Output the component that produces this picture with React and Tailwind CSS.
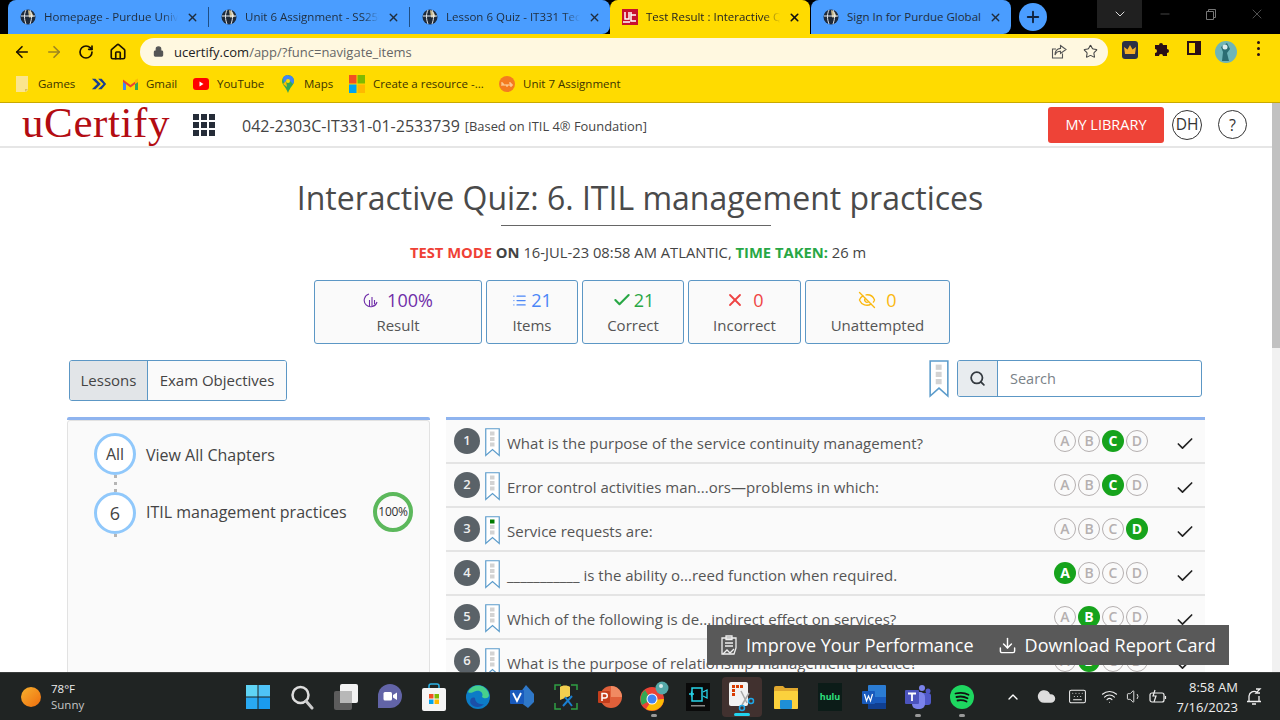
import {
  ArrowLeft, ArrowRight, RotateCw, Home, Lock, Star, X, Plus, ChevronDown, ChevronUp, Minus, Check,
  List, Search, Download, Keyboard, Wifi, Volume1, Cloud, EyeOff,
} from 'lucide-react';

const tabs = [
  { title: 'Homepage - Purdue University', w: 'w-[201px]' },
  { title: 'Unit 6 Assignment - SS250', w: 'w-[201px]' },
  { title: 'Lesson 6 Quiz - IT331 Tech', w: 'w-[200px]' },
];

const rows = [
  { text: 'What is the purpose of the service continuity management?', ans: 'C' },
  { text: 'Error control activities man...ors—problems in which:', ans: 'C' },
  { text: 'Service requests are:', ans: 'D', flagged: true },
  { text: '___________ is the ability o...reed function when required.', ans: 'A' },
  { text: 'Which of the following is de...indirect effect on services?', ans: 'B' },
  { text: 'What is the purpose of relationship management practice?', ans: 'B' },
];

const bookmarks = [
  { label: 'Games', icon: <FolderIcon />, cls: 'ml-[14px] w-[77px]' },
  { label: '', icon: <ChevronsIcon />, cls: 'w-[31px]' },
  { label: 'Gmail', icon: <GmailIcon />, cls: 'w-[71px]' },
  { label: 'YouTube', icon: <YoutubeIcon />, cls: 'w-[87px]' },
  { label: 'Maps', icon: <MapsIcon />, cls: 'w-[69px]' },
  { label: 'Create a resource -...', icon: <MsIcon />, cls: 'w-[150px]' },
  { label: 'Unit 7 Assignment', icon: <HubIcon />, cls: '' },
];

function Globe() {
  return (
    <svg width="16" height="16" viewBox="0 0 16 16" className="shrink-0">
      <circle cx="8" cy="8" r="7.5" fill="#1e2a3a" />
      <path d="M8 1c3 1 5 3.500 5.500 7L9 8.500 8 1z" fill="#c9b98a" />
      <path d="M1 7h14M6 1c-2 4-2 9 0 14M10 1c2 4 2 9 0 14" stroke="#e8edf2" strokeWidth="1" fill="none" />
    </svg>
  );
}

function FolderIcon() {
  return (
    <svg width="16" height="18" viewBox="0 0 16 18">
      <path d="M2 1h9l3 0v14l-2 2H2z" fill="#fbe58d" />
      <path d="M11 17v-3h3z" fill="#dcc25a" />
    </svg>
  );
}

function ChevronsIcon() {
  return (
    <svg width="18" height="14" viewBox="0 0 18 14">
      <path d="M1 1l6 6-6 6h4l6-6-6-6z" fill="#1d3f8f" />
      <path d="M8 1l6 6-6 6h4l5-6-5-6z" fill="#1d3f8f" />
    </svg>
  );
}

function GmailIcon() {
  return (
    <svg width="15" height="12" viewBox="0 0 15 12">
      <path d="M0 2v10h3V5z" fill="#4285f4" />
      <path d="M15 2v10h-3V5z" fill="#34a853" />
      <path d="M0 1.500 7.500 7 15 1.500V4L7.500 9.500 0 4z" fill="#ea4335" />
      <path d="M12 2l3-1.500V4l-3 2z" fill="#fbbc04" />
    </svg>
  );
}

function YoutubeIcon() {
  return (
    <svg width="16" height="12" viewBox="0 0 16 12">
      <rect width="16" height="12" rx="3" fill="#ff0000" />
      <path d="M6.500 3.500v5l4-2.500z" fill="#fff" />
    </svg>
  );
}

function MapsIcon() {
  return (
    <svg width="12" height="18" viewBox="0 0 12 18">
      <path d="M6 0a6 6 0 0 1 6 6c0 4-4 6-6 12-2-6-6-8-6-12a6 6 0 0 1 6-6z" fill="#34a853" />
      <path d="M1 2.500A6 6 0 0 1 6 0l2 2-6 6z" fill="#4285f4" />
      <path d="M8 .5a6 6 0 0 1 4 5.500c0 1-.3 2-1 3L6 4z" fill="#4285f4" />
      <path d="M1 9 4 6l1 6z" fill="#fbbc04" />
      <circle cx="6" cy="6" r="2" fill="#ffdb00" />
    </svg>
  );
}

function MsIcon() {
  return (
    <svg width="16" height="18" viewBox="0 0 16 18">
      <rect width="7.500" height="8.500" fill="#f25022" />
      <rect x="8.500" width="7.500" height="8.500" fill="#7fba00" />
      <rect y="9.500" width="7.500" height="8.500" fill="#00a4ef" />
      <rect x="8.500" y="9.500" width="7.500" height="8.500" fill="#ffb900" />
    </svg>
  );
}

function HubIcon() {
  return (
    <svg width="16" height="16" viewBox="0 0 16 16">
      <circle cx="8" cy="8" r="8" fill="#f47b20" />
      <path d="M3 10V6M3 8h2v2M7 8v2h2V8M11 6v4h2V8h-2" stroke="#ffe0b0" strokeWidth="1" fill="none" />
    </svg>
  );
}

function ActiveFavicon() {
  return (
    <svg width="16" height="16" viewBox="0 0 16 16" className="shrink-0">
      <rect width="16" height="16" fill="#c8102e" />
      <path d="M3 3v7h4V3M9 3v9h5M9 6h5M1 13h7" stroke="#fff" strokeWidth="1.500" fill="none" />
    </svg>
  );
}

function ShareIcon() {
  return (
    <svg width="16" height="16" viewBox="0 0 16 16" fill="none" stroke="#555" strokeWidth="1.100" className="ml-auto">
      <path d="M11.500 9.500v4.500h-10V5H5" />
      <path d="M9.500 1.500L15 5.500l-5.500 4V7.300C7 7.300 5 8.500 4 11c0-3.500 2-6.200 5.500-6.600z" />
    </svg>
  );
}

function Ribbon({ flagged, large }) {
  return (
    <svg width={large ? 22 : 15} height={large ? 38 : 29} viewBox="0 0 15 29" className="shrink-0">
      <path d="M.75.75h13.500V27.500L7.500 21.500.75 27.500z" fill="#fff" stroke="#5c9ccb" strokeWidth="1.200" />
      <rect x="5" y="3.500" width="4.500" height="4" fill={flagged ? '#007a00' : '#d3d3d3'} />
      <rect x="5" y="9" width="4.500" height="4" fill="#d3d3d3" />
      <rect x="5" y="14.500" width="4.500" height="4" fill="#d3d3d3" />
    </svg>
  );
}

function ResultIcon() {
  return (
    <svg width="16" height="16" viewBox="0 0 16 16" fill="none" stroke="#6f2da8" strokeWidth="1.100">
      <path d="M6 2a6.500 6.500 0 1 0 8 8" />
      <path d="M6.500 14V8M9 14V5M11.500 12V8" />
    </svg>
  );
}

function StatBox({ cls, color, icon, value, label, gap = 'gap-2' }) {
  return (
    <div className={`${cls} h-[64px] border border-[#5c97c5] rounded-[3px] bg-[#fafafa] flex flex-col items-center pt-[6px]`}>
      <div className={`flex items-center ${gap} text-[18px] leading-[26px] ${color}`}>
        {icon}
        <span>{value}</span>
      </div>
      <div className="text-[15px] leading-[22px] mt-[1px] text-[#555]">{label}</div>
    </div>
  );
}

function OptionDot({ letter, active }) {
  return (
    <span
      className={`w-[22px] h-[22px] rounded-full flex items-center justify-center text-[14px] leading-none ${
        active ? 'bg-[#16a31c] text-white font-bold' : 'border border-[#b5b0b0] text-[#b5b0b0] font-semibold'
      }`}
    >
      {letter}
    </span>
  );
}

function QuestionRow({ index, row }) {
  return (
    <div className="h-[44px] shrink-0 bg-[#fafafa] border-b-2 border-[#e4e4e4] flex items-start pl-[8px]">
      <span className="w-[26px] h-[26px] mt-[8px] rounded-full bg-[#5a6268] text-[#eee] text-[13px] font-semibold flex items-center justify-center shrink-0">
        {index + 1}
      </span>
      <span className="ml-[5px] mt-[8px]">
        <Ribbon flagged={row.flagged} />
      </span>
      <span className="ml-[7px] mt-[12px] w-[541px] text-[15px] tracking-[0.02px] leading-[22px] text-[#555] whitespace-nowrap">{row.text}</span>
      <span className="mt-[10px] ml-[6px] flex gap-[2px]">
        {['A', 'B', 'C', 'D'].map((l) => (
          <OptionDot key={l} letter={l} active={l === row.ans} />
        ))}
      </span>
      <Check className="ml-[27px] mt-[14px] text-[#222]" size={20} strokeWidth={2} />
    </div>
  );
}

function TaskIcon({ children }) {
  return <div className="w-[44px] h-[48px] flex items-center justify-center shrink-0 relative">{children}</div>;
}

function TaskbarIcons() {
  return (
    <div className="flex">
      <TaskIcon>
        <svg width="24" height="24" viewBox="0 0 24 24">
          <rect width="11.500" height="11.500" fill="#5fd4f5" />
          <rect x="12.500" width="11.500" height="11.500" fill="#4fc3f7" />
          <rect y="12.500" width="11.500" height="11.500" fill="#29a9f2" />
          <rect x="12.500" y="12.500" width="11.500" height="11.500" fill="#1a9bf0" />
        </svg>
      </TaskIcon>
      <TaskIcon>
        <svg width="24" height="26" viewBox="0 0 24 26" fill="none">
          <circle cx="10.500" cy="11" r="8" stroke="#ddd" strokeWidth="2.500" />
          <path d="M16 17l6 7" stroke="#ccc" strokeWidth="3" strokeLinecap="round" />
        </svg>
      </TaskIcon>
      <TaskIcon>
        <svg width="24" height="26" viewBox="0 0 24 26">
          <rect y="7" width="18" height="19" rx="2" fill="#5c5c5c" />
          <rect x="6" width="18" height="19" rx="2" fill="#f2f2f2" />
          <rect x="6" y="7" width="12" height="12" fill="#b8b8b8" />
        </svg>
      </TaskIcon>
      <TaskIcon>
        <svg width="24" height="26" viewBox="0 0 24 26">
          <path d="M12 0a12 12 0 0 1 0 24H0v-12A12 12 0 0 1 12 0z" fill="#6264a7" />
          <rect x="5.500" y="8" width="8.500" height="8.500" rx="1.500" fill="#fff" />
          <path d="M15 11l4-2.500v7.500L15 13.500z" fill="#fff" />
        </svg>
      </TaskIcon>
      <TaskIcon>
        <svg width="24" height="28" viewBox="0 0 24 28">
          <path d="M7 6V3a2 2 0 0 1 2-2h6a2 2 0 0 1 2 2v3" fill="none" stroke="#2bb3e8" strokeWidth="1.500" />
          <rect y="5" width="24" height="23" rx="2" fill="#f5f5f5" />
          <rect x="7" y="11" width="4.500" height="4.500" fill="#f25022" />
          <rect x="12.500" y="11" width="4.500" height="4.500" fill="#7fba00" />
          <rect x="7" y="16.500" width="4.500" height="4.500" fill="#00a4ef" />
          <rect x="12.500" y="16.500" width="4.500" height="4.500" fill="#ffb900" />
        </svg>
      </TaskIcon>
      <TaskIcon>
        <svg width="24" height="26" viewBox="0 0 24 26">
          <circle cx="12" cy="13" r="12" fill="#0c7cc6" />
          <path d="M2 8a11 11 0 0 1 21 3c0 4-5 4-7 2 2-4-2-7-6-6-3 1-6 3-8 1z" fill="#47d08c" />
          <path d="M9 14c0 4 4 7 9 6-3 4-10 4-13 0-2-3 0-8 4-6z" fill="#1b4fa8" />
        </svg>
      </TaskIcon>
      <TaskIcon>
        <svg width="24" height="26" viewBox="0 0 24 26">
          <path d="M10 9l6-8 8 9v8l-6 6-8-6z" fill="#2f78c8" />
          <rect y="6" width="14" height="14" rx="1" fill="#185abd" />
          <path d="M3 9l4 8 4-8" stroke="#fff" strokeWidth="1.800" fill="none" />
        </svg>
      </TaskIcon>
      <TaskIcon>
        <svg width="24" height="26" viewBox="0 0 24 26">
          <path d="M6 3c2-2 8-2 10 0v9l-10 4z" fill="#f3cf4f" />
          <path d="M1 6V1h6M17 1h6v5M1 19v6h6M23 19v6h-6" stroke="#2f9e44" strokeWidth="1.500" fill="none" />
          <path d="M9 22l9-10M11 13l7 9" stroke="#1a7fd0" strokeWidth="2" />
        </svg>
      </TaskIcon>
      <TaskIcon>
        <svg width="24" height="26" viewBox="0 0 24 26">
          <circle cx="13" cy="13" r="11" fill="#e0603a" />
          <path d="M13 2a11 11 0 0 1 11 11H13z" fill="#f08a62" />
          <rect y="7" width="12" height="12" rx="1" fill="#c43e1c" />
          <path d="M4 17V9.500h3a2 2 0 0 1 0 4.500H4" stroke="#fff" strokeWidth="1.500" fill="none" />
        </svg>
      </TaskIcon>
      <TaskIcon>
        <svg width="30" height="32" viewBox="0 0 30 32">
          <circle cx="13" cy="18" r="12" fill="#ea4335" />
          <path d="M3 24A12 12 0 0 1 6 9l6 10z" fill="#34a853" />
          <path d="M25 18a12 12 0 0 1-18 10l6-9z" fill="#fbbc04" />
          <circle cx="13" cy="18" r="5.500" fill="#fff" />
          <circle cx="13" cy="18" r="4.500" fill="#4285f4" />
          <circle cx="23" cy="7" r="6.500" fill="#54a8a8" />
          <circle cx="22" cy="5" r="2" fill="#d8eaea" />
        </svg>
        <span className="absolute bottom-[4px] w-[6px] h-[3px] rounded-full bg-[#999]" />
      </TaskIcon>
      <TaskIcon>
        <svg width="24" height="28" viewBox="0 0 24 28">
          <rect width="24" height="28" fill="#0a0a0a" />
          <path d="M6 5h10v13H6z" fill="none" stroke="#27d3e8" strokeWidth="1.500" />
          <path d="M17 9l4-2v8l-4-2M3 11h5M5.500 8.500v5" fill="none" stroke="#27d3e8" strokeWidth="1.300" />
          <rect x="5" y="22" width="14" height="1.500" fill="#888" />
        </svg>
      </TaskIcon>
      <TaskIcon>
        <div className="absolute left-[2px] top-[4px] w-[40px] h-[40px] rounded bg-[#41312f]" />
        <svg width="26" height="30" viewBox="0 0 26 30" className="relative">
          <rect width="19" height="24" rx="2" fill="#f2f2f2" />
          <path d="M3 3h3v3H3zM7 3h3v3H7zM11 3h3v3h-3zM3 7h3v3H3zM3 11h3v3H3z" fill="#d83b01" />
          <path d="M12 9l6 12M20 11l-7 12" stroke="#a9a9a9" strokeWidth="1.500" />
          <circle cx="22" cy="19" r="2.500" fill="none" stroke="#1ea7e8" strokeWidth="1.500" />
          <circle cx="13" cy="26" r="2.500" fill="none" stroke="#1ea7e8" strokeWidth="1.500" />
        </svg>
        <span className="absolute bottom-[5px] left-[14px] w-[16px] h-[3px] rounded-full bg-[#22d3ee]" />
      </TaskIcon>
      <TaskIcon>
        <svg width="24" height="24" viewBox="0 0 24 24">
          <path d="M0 3a2 2 0 0 1 2-2h7l2 2h13v19a2 2 0 0 1-2 2H2a2 2 0 0 1-2-2z" fill="#e0a82e" />
          <rect y="6" width="24" height="18" rx="1" fill="#fbd13d" />
          <rect x="6" y="15" width="12" height="9" rx="1" fill="#1f8fd6" />
        </svg>
      </TaskIcon>
      <TaskIcon>
        <div className="w-[24px] h-[28px] bg-[#0c1c18] flex items-center justify-center text-[#2ee27f] text-[9px] font-bold">hulu</div>
      </TaskIcon>
      <TaskIcon>
        <svg width="24" height="24" viewBox="0 0 24 24">
          <rect x="6" width="18" height="24" rx="1" fill="#2b7cd3" />
          <rect x="6" y="12" width="18" height="6" fill="#185abd" />
          <rect x="6" y="18" width="18" height="6" fill="#103f91" />
          <rect y="6" width="13" height="13" rx="1" fill="#185abd" />
          <path d="M2.500 9l2 7 2-5 2 5 2-7" stroke="#fff" strokeWidth="1.200" fill="none" />
        </svg>
      </TaskIcon>
      <TaskIcon>
        <svg width="26" height="26" viewBox="0 0 26 26">
          <circle cx="17" cy="4" r="3" fill="#7b83eb" />
          <circle cx="23" cy="7" r="2.500" fill="#5059c9" />
          <rect x="12" y="9" width="14" height="12" rx="3" fill="#5059c9" />
          <rect x="7" y="8" width="13" height="17" rx="5" fill="#7b83eb" />
          <rect y="6" width="14" height="14" rx="1" fill="#4b53bc" />
          <path d="M3 9.500h8M7 9.500V17" stroke="#fff" strokeWidth="1.800" />
        </svg>
        <span className="absolute bottom-[4px] w-[6px] h-[3px] rounded-full bg-[#999]" />
      </TaskIcon>
      <TaskIcon>
        <svg width="24" height="24" viewBox="0 0 24 24" fill="none">
          <circle cx="12" cy="12" r="12" fill="#1ed760" />
          <path d="M5.500 8.500c4-1 9-1 13 1.200M6.500 12c3.500-.8 7.500-.6 11 1.200M7.500 15.500c3-.7 6-.4 9 1" stroke="#111" strokeWidth="1.800" strokeLinecap="round" />
        </svg>
        <span className="absolute bottom-[4px] w-[6px] h-[3px] rounded-full bg-[#999]" />
      </TaskIcon>
    </div>
  );
}

export default function App() {
  return (
    <div className="w-[1280px] h-[720px] overflow-hidden relative flex flex-col bg-white font-['Open_Sans',sans-serif]">
      {/* tab strip */}
      <div className="h-[34px] shrink-0 bg-black flex pl-[8px] relative">
        {tabs.map((t, i) => (
          <div key={t.title} className={`${t.w} h-full bg-[#4a9dff] flex items-center pl-[12px] relative ${i === 0 ? 'rounded-tl-lg' : ''} ${i === 2 ? 'rounded-tr-lg rounded-br-lg' : ''}`}>
            <Globe />
            <span className="ml-[8px] w-[134px] whitespace-nowrap overflow-hidden text-[11.5px] text-[#1f2d3d] [mask-image:linear-gradient(to_right,black_88%,transparent)]">{t.title}</span>
            <X className="ml-[8px] text-[#1f2d3d]" size={13} strokeWidth={2.500} />
            {i < 2 && <span className="absolute right-0 top-[7px] h-[20px] w-px bg-[#1f4f85]" />}
          </div>
        ))}
        <div className="w-[200px] h-full bg-[#ffdb00] rounded-t-lg flex items-center pl-[12px]">
          <ActiveFavicon />
          <span className="ml-[8px] w-[134px] whitespace-nowrap overflow-hidden text-[11.5px] text-[#222] [mask-image:linear-gradient(to_right,black_88%,transparent)]">Test Result : Interactive Quiz</span>
          <X className="ml-[8px] text-[#111]" size={13} strokeWidth={3} />
        </div>
        <div className="w-[200px] ml-px h-full bg-[#4a9dff] rounded-t-lg rounded-br-lg flex items-center pl-[12px]">
          <Globe />
          <span className="ml-[8px] w-[134px] whitespace-nowrap overflow-hidden text-[11.5px] text-[#1f2d3d]">Sign In for Purdue Global</span>
          <X className="ml-[8px] text-[#1f2d3d]" size={13} strokeWidth={2.500} />
        </div>
        <div className="w-[28px] h-[28px] ml-[8px] mt-[3px] rounded-full bg-[#4a9dff] flex items-center justify-center">
          <Plus className="text-[#10233f]" size={18} strokeWidth={2.500} />
        </div>
        <div className="w-[45px] h-[28px] ml-[50px] bg-[#202020] flex items-center justify-center">
          <ChevronDown className="text-[#ddd]" size={16} strokeWidth={1.500} />
        </div>
        <div className="flex ml-[0px]">
          <div className="w-[46px] h-[28px] flex items-center justify-center"><Minus className="text-[#777]" size={14} strokeWidth={1} /></div>
          <div className="w-[46px] h-[28px] flex items-center justify-center">
            <svg width="10" height="11" viewBox="0 0 10 11" fill="none" stroke="#777"><path d="M.5 2.500h7v8h-7zM2.500 2.500V.5h7v8H7.500" /></svg>
          </div>
          <div className="w-[46px] h-[28px] flex items-center justify-center"><X className="text-[#777]" size={16} strokeWidth={1} /></div>
        </div>
      </div>

      {/* toolbar */}
      <div className="h-[35px] shrink-0 bg-[#ffdb00] flex items-center pl-[6px]">
        <div className="w-[32px] flex justify-center"><ArrowLeft className="text-[#1c1200]" size={18} strokeWidth={2.200} /></div>
        <div className="w-[32px] flex justify-center"><ArrowRight className="text-[#9c8420]" size={18} strokeWidth={2.200} /></div>
        <div className="w-[32px] flex justify-center"><RotateCw className="text-[#1c1200]" size={16} strokeWidth={2.500} /></div>
        <div className="w-[32px] flex justify-center"><Home className="text-[#1c1200]" size={18} strokeWidth={2.200} /></div>
        <div className="ml-[6px] w-[968px] h-[28px] rounded-full bg-[#fff8e0] flex items-center pl-[13px] pr-[10px]">
          <Lock className="text-[#555]" size={11} fill="#555" strokeWidth={2.500} />
          <span className="ml-[10px] mt-[2px] text-[13px] text-[#666]"><span className="text-[#222]">ucertify.com</span>/app/?func=navigate_items</span>
          <ShareIcon />
          <Star className="ml-[16px] text-[#444]" size={15} strokeWidth={1.700} />
        </div>
        <div className="ml-[6px] flex">
          <div className="w-[32px] flex justify-center">
            <div className="w-[16px] h-[18px] rounded-[3px] bg-[#2c3145] flex items-center justify-center">
              <svg width="12" height="10" viewBox="0 0 12 10"><path d="M1 9 0 2l3.500 2.500L6 0l2.500 4.500L12 2l-1 7z" fill="#f5b025" /></svg>
            </div>
          </div>
          <div className="w-[32px] flex justify-center">
            <svg width="16" height="16" viewBox="0 0 16 16"><path d="M1 4h4a2 2 0 1 1 4 0h4v4a2 2 0 1 1 0 4v3H9a2 2 0 1 0-4 0H1v-3a2 2 0 1 0 0-4z" fill="#2a0f17" /></svg>
          </div>
          <div className="w-[32px] flex justify-center">
            <div className="w-[14px] h-[14px] border-2 border-[#2a0f17] border-r-[6px]" />
          </div>
          <div className="w-[32px] flex justify-center">
            <svg width="22" height="22" viewBox="0 0 22 22"><circle cx="11" cy="11" r="11" fill="#6fb5b8" /><path d="M6 6l6-4 3 6-3 4 2 8H7l1-9z" fill="#2b6e73" /><circle cx="10" cy="6" r="2.500" fill="#dcecec" /></svg>
          </div>
          <div className="w-[32px] flex flex-col items-center gap-[3px]">
            <span className="w-[3px] h-[3px] rounded-full bg-[#2a0f17]" />
            <span className="w-[3px] h-[3px] rounded-full bg-[#2a0f17]" />
            <span className="w-[3px] h-[3px] rounded-full bg-[#2a0f17]" />
          </div>
        </div>
      </div>

      {/* bookmarks bar */}
      <div className="h-[34px] shrink-0 bg-[#ffdb00] border-b border-[#c9a900] flex items-center pb-[3px]">
        {bookmarks.map((b, i) => (
          <div key={i} className={`${b.cls} flex items-center gap-[8px] text-[11.5px] text-[#3b3300] shrink-0`}>
            <span className="w-[16px] flex justify-center shrink-0">{b.icon}</span>
            {b.label && <span className="whitespace-nowrap">{b.label}</span>}
          </div>
        ))}
      </div>

      {/* page */}
      <div className="flex-1 min-h-0 flex overflow-hidden">
        <div className="w-[1272px] shrink-0 overflow-hidden">
          <header className="h-[45px] border-b-2 border-[#e6e6e6] flex items-center pl-[22px] pr-[25px]">
            <span className="font-['Liberation_Serif',serif] text-[43px] leading-none tracking-[0.6px] text-[#b30c12] -mt-[4px] w-[171px] shrink-0 whitespace-nowrap">uCertify</span>
            <div className="grid grid-cols-3 gap-[2px] shrink-0">
              {Array.from({ length: 9 }).map((_, i) => (
                <span key={i} className="w-[6px] h-[6px] bg-[#252c38]" />
              ))}
            </div>
            <span className="ml-[27px] mt-[3px] text-[16px] text-[#444] whitespace-nowrap">042-2303C-IT331-01-2533739</span>
            <span className="ml-[5px] text-[12.9px] text-[#444] mt-[5px] whitespace-nowrap">[Based on ITIL 4® Foundation]</span>
            <span className="ml-auto w-[116px] h-[36px] rounded-[3px] bg-[#ee4337] text-white text-[14.5px] flex items-center justify-center">MY LIBRARY</span>
            <span className="ml-[8px] w-[30px] h-[30px] rounded-full border border-[#333] text-[#333] text-[15.5px] flex items-center justify-center">DH</span>
            <span className="ml-[16px] w-[29px] h-[29px] rounded-full border border-[#333] text-[#333] text-[16px] flex items-center justify-center">?</span>
          </header>

          <div className="flex flex-col items-center">
            <h1 className="mt-[26px] ml-[8px] text-[32px] leading-[48px] font-normal text-[#4a4a4a] whitespace-nowrap">Interactive Quiz: 6. ITIL management practices</h1>
            <div className="mt-[3px] w-[270px] h-px bg-[#666]" />
            <div className="mt-[16px] mb-[1px] ml-[4px] text-[14.75px] leading-[20px] text-[#444] whitespace-nowrap">
              <span className="text-[#ef4136] font-bold">TEST MODE</span> <span className="font-bold">ON</span> 16-JUL-23 08:58 AM ATLANTIC, <span className="text-[#28a745] font-bold">TIME TAKEN:</span> 26 m
            </div>
          </div>

          <div className="mt-[17px] ml-[314px] flex gap-[4px]">
            <StatBox cls="w-[168px]" color="text-[#6f2da8]" icon={<ResultIcon />} value="100%" label="Result" />
            <StatBox cls="w-[92px]" color="text-[#4a86f7]" icon={<List size={15} strokeWidth={2} />} value="21" label="Items" gap="gap-[4px]" />
            <StatBox cls="w-[102px]" color="text-[#28a745]" icon={<Check size={20} strokeWidth={2.500} />} value="21" label="Correct" gap="gap-[2px]" />
            <StatBox cls="w-[113px]" color="text-[#ef4444]" icon={<X size={20} strokeWidth={2.200} />} value="0" label="Incorrect" gap="gap-[8px]" />
            <StatBox cls="w-[145px]" color="text-[#fbb80f]" icon={<EyeOff size={18} strokeWidth={1.800} />} value="0" label="Unattempted" gap="gap-[10px]" />
          </div>

          <div className="mt-[16px] pl-[69px] flex items-start">
            <div className="flex h-[41px] border border-[#5c97c5] rounded-[3px] overflow-hidden text-[15px] text-[#444]">
              <span className="w-[78px] bg-[#e2e5e8] border-r border-[#5c97c5] flex items-center justify-center">Lessons</span>
              <span className="w-[138px] bg-[#fafafa] flex items-center justify-center">Exam Objectives</span>
            </div>
            <div className="ml-[641px]"><Ribbon large /></div>
            <div className="ml-[7px] flex w-[245px] h-[37px] border border-[#5c97c5] rounded-[3px] overflow-hidden">
              <span className="w-[40px] shrink-0 bg-[#e8ecef] border-r border-[#5c97c5] flex items-center justify-center">
                <Search className="text-[#343a40]" size={17} strokeWidth={2.500} />
              </span>
              <span className="flex-1 pl-[12px] flex items-center text-[14.5px] text-[#7a8288]">Search</span>
            </div>
          </div>

          <div className="mt-[16px] pl-[67px] flex items-start gap-[16px]">
            <div className="w-[363px] h-[300px] shrink-0 border-t-[3px] border-[#8fb4ef] rounded-t-[2px]">
              <div className="h-full bg-[#fafafa] border border-[#e2e2e2] rounded-[3px] pl-[26px] pt-[12px] flex flex-col">
                <div className="flex items-center">
                  <span className="w-[42px] h-[42px] rounded-full bg-white border-[3px] border-[#90c8fb] text-[16px] text-[#444] flex items-center justify-center shrink-0">All</span>
                  <span className="ml-[10px] mt-[1px] text-[16px] text-[#444]">View All Chapters</span>
                </div>
                <div className="ml-[20px] h-[17px] border-l-[3px] border-dotted border-[#b5b5b5]" />
                <div className="flex items-center">
                  <span className="w-[42px] h-[42px] rounded-full bg-white border-[3px] border-[#90c8fb] text-[18px] text-[#444] flex items-center justify-center shrink-0">6</span>
                  <span className="ml-[10px] -mt-[2px] w-[227px] text-[16px] text-[#444] whitespace-nowrap">ITIL management practices</span>
                  <span className="w-[40px] h-[40px] -mt-[2px] rounded-full border-[4px] border-[#5cb85c] text-[12px] tracking-tight text-[#333] flex items-center justify-center shrink-0">100%</span>
                </div>
                <div className="ml-[20px] h-[3px] border-l-[3px] border-dotted border-[#b5b5b5]" />
              </div>
            </div>
            <div className="w-[759px] shrink-0 border-t-[3px] border-[#8fb4ef]">
              {rows.map((r, i) => (
                <QuestionRow key={i} index={i} row={r} />
              ))}
            </div>
          </div>
        </div>
        <div className="w-[8px] shrink-0 bg-[#f1f1f1] pt-0">
          <div className="h-[245px] bg-[#c1c1c1]" />
        </div>
      </div>

      {/* floating action bar */}
      <div className="absolute left-[707px] top-[625px] w-[522px] h-[40px] bg-[#595959] flex items-center pl-[13px] text-[18px] text-white whitespace-nowrap">
        <svg width="18" height="20" viewBox="0 0 18 20" fill="none" stroke="#eee" strokeWidth="1.300">
          <path d="M2 3h14v10l-2 6H2z" />
          <path d="M6 1h6v3.500H6zM5 8h8M5 11h8M3 19l4-4 3 3 4-4" />
        </svg>
        <span className="ml-[8px]">Improve Your Performance</span>
        <Download className="ml-[24px] text-white" size={19} strokeWidth={1.800} />
        <span className="ml-[8px]">Download Report Card</span>
      </div>

      {/* taskbar */}
      <div className="h-[48px] shrink-0 bg-[#202423] border-t border-[#3a3d3c] flex items-center text-white">
        <div className="w-[236px] shrink-0 flex items-center pl-[21px]">
          <span className="w-[20px] h-[20px] rounded-full bg-gradient-to-br from-[#f6b12d] to-[#ee6c0c]" />
          <div className="ml-[10px] text-[11.5px] leading-[16px]">
            <div className="text-[#eee]">78°F</div>
            <div className="text-[#c5c5c5]">Sunny</div>
          </div>
        </div>
        <TaskbarIcons />
        <div className="flex items-center ml-[21px]">
          <ChevronUp className="text-white" size={16} strokeWidth={2} />
          <Cloud className="ml-[16px] text-[#ddd]" fill="#ddd" size={19} />
          <Keyboard className="ml-[12px] text-[#eee]" size={19} strokeWidth={1.300} />
          <Wifi className="ml-[14px] text-[#eee]" size={17} strokeWidth={1.500} />
          <Volume1 className="ml-[8px] text-[#eee]" size={17} strokeWidth={1.300} />
          <svg width="18" height="18" viewBox="0 0 18 18" fill="none" stroke="#eee" strokeWidth="1.200" className="ml-[6px]">
            <rect x="1" y="5" width="14" height="9" rx="2" />
            <path d="M16.500 8v3M6 2L4 8h3l-2 6" />
          </svg>
          <div className="ml-[9px] w-[62px] text-right text-[13px] leading-[20px] text-[#eee] whitespace-nowrap">
            <div>8:58 AM</div>
            <div>7/16/2023</div>
          </div>
          <svg width="16" height="18" viewBox="0 0 16 18" fill="none" stroke="#eee" strokeWidth="1.300" className="ml-[8px]">
            <path d="M3 13V8a5 5 0 0 1 8-3.500M13 8v5M1 13.500h14M6 16h4" />
            <path d="M10 1h4l-4 4h4" />
          </svg>
        </div>
      </div>
    </div>
  );
}
